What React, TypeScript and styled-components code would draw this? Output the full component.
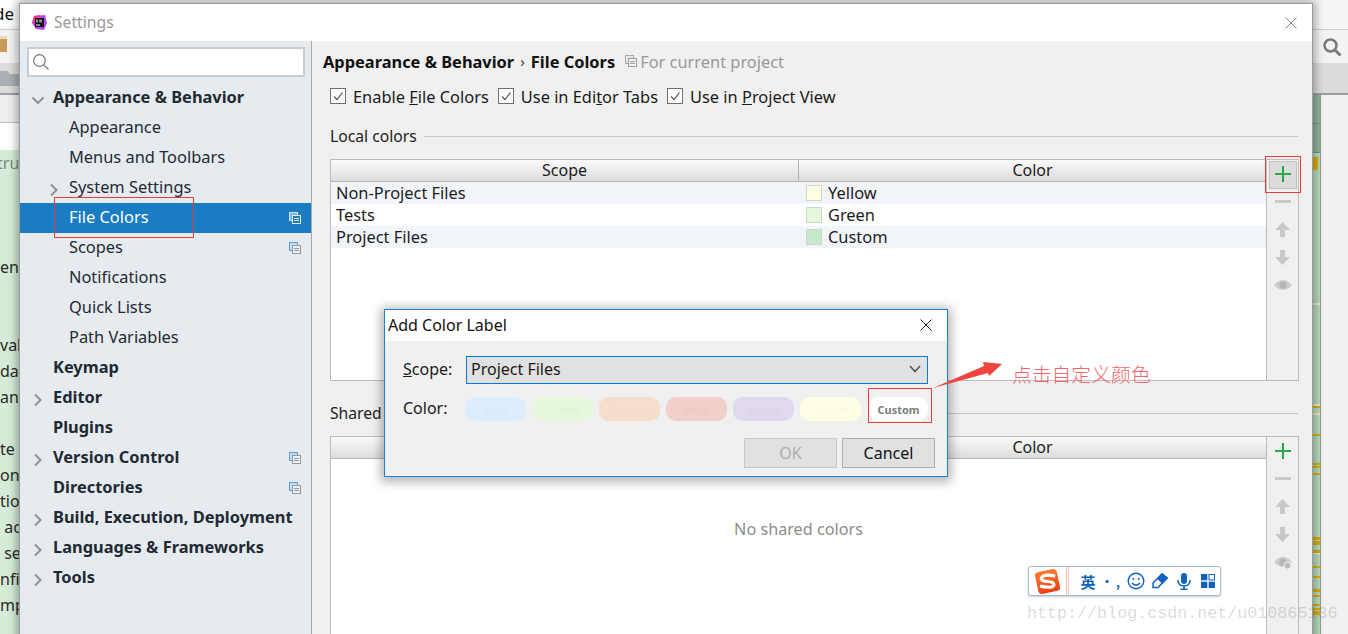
import React from "react";
import styled, { createGlobalStyle } from "styled-components";

const Global = createGlobalStyle`
  html, body { margin: 0; padding: 0; background: #f0f0f0; }
  body { font-family: "Noto Sans", "Liberation Sans", sans-serif; font-size: 16px; color: #1a1a1a; }
  * { box-sizing: border-box; }
`;

const Screen = styled.div`
  position: relative;
  width: 1348px;
  height: 634px;
  overflow: hidden;
  background: #f0f0f0;
`;

/* ---------- IDE behind the settings window ---------- */
const Ide = styled.div`
  display: flex;
  flex-direction: column;
  height: 100%;
`;
const MenuBar = styled.div`
  height: 30px;
  padding-top: 3px;
  line-height: 22px;
  background: #f5f5f5;
  color: #111;
  border-bottom: 1px solid #d0d0d0;
  font-size: 17px;
`;
const MenuLeft = styled.div`
  width: 20px;
  height: 100%;
  margin-top: -3px;
  padding-top: 3px;
  background: #fff;
  white-space: pre;
  overflow: hidden;
  text-indent: -6px;
`;
const ToolBar = styled.div`
  height: 33px;
  display: flex;
  justify-content: space-between;
  align-items: center;
  padding-right: 6px;
  background: #f3f3f3;
`;
const FolderSlot = styled.div`
  display: flex;
  margin-bottom: 5px;
`;
const NavBar = styled.div`
  height: 32px;
  display: flex;
  align-items: center;
  background: #dcdcdc;
  border-bottom: 2px solid #9e9e9e;
`;
const IdeBody = styled.div`
  flex: 1;
  display: flex;
  min-height: 0;
`;
const EditorEdge = styled.div`
  width: 20px;
  display: flex;
  flex-direction: column;
  background: #fff;
`;
const TabEdge = styled.div`
  height: 28px;
  flex: none;
  background: #eeeeee;
  border-bottom: 1px solid #bbb;
`;
const BlankEdge = styled.div`
  height: 27px;
  flex: none;
  background: #fff;
`;
const CodeEdge = styled.div`
  flex: 1;
  background: #d6ecd8;
  overflow: hidden;
  font-size: 16px;
`;
const CodeLine = styled.div<{ $muted?: boolean }>`
  height: 26px;
  line-height: 26px;
  white-space: pre;
  overflow: hidden;
  text-indent: ${(p) => (p.$muted ? -3 : 0)}px;
  color: ${(p) => (p.$muted ? "#7c8a7c" : "#2a2a2a")};
`;
const Filler = styled.div`
  flex: 1;
`;
const Stripe = styled.div`
  position: relative;
  width: 9px;
  background: #b8dcc0;
  border-right: 1px solid #999;
`;
const StripeHead = styled.div`
  height: 29px;
  background: #8fb39a;
  border-bottom: 1px solid #7b9685;
`;
const Mark = styled.div<{ $top: number; $h: number; $light?: boolean; $w?: number }>`
  position: absolute;
  left: 0;
  top: ${(p) => p.$top}px;
  width: ${(p) => p.$w ?? 8}px;
  height: ${(p) => p.$h}px;
  background: ${(p) => (p.$light ? "#f2eec0" : "#dcb100")};
`;
const Gutter = styled.div`
  width: 27px;
  background: #f1f1f1;
`;

/* ---------- settings window ---------- */
const SettingsWindow = styled.div`
  position: absolute;
  left: 19px;
  top: 3px;
  width: 1294px;
  height: 640px;
  display: flex;
  flex-direction: column;
  background: #f0f0f0;
  border: 1px solid #9b9b9b;
  box-shadow: 0 0 9px 2px rgba(0, 0, 0, 0.35);
  font-size: 16.4px;
`;
const TitleBar = styled.div`
  height: 37px;
  flex: none;
  display: flex;
  align-items: center;
  padding: 0 15px 0 12px;
  background: #fff;
`;
const WindowTitle = styled.div`
  margin-left: 7px;
  flex: 1;
  font-size: 15.7px;
  color: #9a9a9a;
  padding-bottom: 2px;
`;
const WindowBody = styled.div`
  flex: 1;
  display: flex;
  min-height: 0;
`;
const Sidebar = styled.div`
  width: 292px;
  flex: none;
  padding-top: 6px;
  background: #e6ebf0;
  border-right: 1px solid #a9a9a9;
`;
const SearchBox = styled.div`
  height: 30px;
  margin: 0 6px 6px 7px;
  display: flex;
  align-items: center;
  padding-left: 3px;
  background: #fff;
  border: 2px solid #c9cdd0;
`;
const TreeRow = styled.div<{ $selected?: boolean; $depth: number; $top?: boolean }>`
  position: relative;
  height: 30px;
  display: flex;
  align-items: center;
  padding-left: ${(p) => (p.$depth === 0 ? 33 : 49)}px;
  padding-right: 10px;
  padding-bottom: 4px;
  background: ${(p) => (p.$selected ? "#1a7cc3" : "transparent")};
  color: ${(p) => (p.$selected ? "#fff" : "#1f2a33")};
  font-weight: ${(p) => (p.$top ? 700 : 400)};
`;
const TreeLabel = styled.span`
  flex: 1;
  white-space: nowrap;
`;
const TreeBadge = styled.span`
  display: flex;
  margin-top: 4px;
`;
const Twist = styled.span<{ $left: number }>`
  position: absolute;
  left: ${(p) => p.$left}px;
  top: 6px;
  display: block;
  width: 14px;
  height: 14px;
`;

const Panel = styled.div`
  flex: 1;
  min-width: 0;
  padding: 0 13px 0 18px;
`;
const Crumbs = styled.div`
  height: 42px;
  margin-left: -7px;
  padding-bottom: 2px;
  display: flex;
  align-items: center;
  white-space: nowrap;
`;
const CrumbBold = styled.span`
  font-weight: 700;
  color: #111;
`;
const CrumbSep = styled.span`
  margin: 0 6px;
  font-weight: 400;
  color: #444;
  font-size: 15px;
`;
const ProjectNote = styled.span`
  margin-left: 10px;
  display: inline-flex;
  align-items: center;
  gap: 3px;
  color: #999;
`;
const CheckRow = styled.div`
  height: 28px;
  padding-bottom: 2px;
  display: flex;
  align-items: center;
  gap: 9px;
`;
const CheckItem = styled.label`
  display: flex;
  align-items: center;
  gap: 7px;
  white-space: nowrap;
  color: #1a1a1a;
`;
const Box = styled.span`
  width: 16px;
  height: 16px;
  flex: none;
  display: flex;
  background: #fff;
  border: 1px solid #6f6f6f;
`;
const SectionHead = styled.div<{ $gap: number }>`
  margin-top: ${(p) => p.$gap}px;
  height: 20px;
  display: flex;
  align-items: center;
  gap: 7px;
  color: #222;
  font-size: 15.7px;
  white-space: nowrap;
`;
const SectionRule = styled.div`
  flex: 1;
  height: 1px;
  margin-right: 1px;
  background: #c6c6c6;
`;
const TableFrame = styled.div<{ $h: number; $top: number }>`
  margin-top: ${(p) => p.$top}px;
  height: ${(p) => p.$h}px;
  display: flex;
  border: 1px solid #bcbcbc;
  background: #fff;
`;
const TableMain = styled.div`
  flex: 1;
  min-width: 0;
  display: flex;
  flex-direction: column;
`;
const HeaderRow = styled.div`
  height: 22px;
  flex: none;
  display: grid;
  grid-template-columns: 468px 1fr;
  background: linear-gradient(#fbfbfb, #dcdcdc);
  border-bottom: 1px solid #b8b8b8;
  line-height: 21px;
  text-align: center;
  color: #1c1c1c;
  font-size: 16px;
`;
const HeaderCell = styled.div<{ $first?: boolean }>`
  border-right: ${(p) => (p.$first ? "1px solid #b5b5b5" : "none")};
`;
const ColorRow = styled.div<{ $odd: boolean }>`
  height: 22px;
  flex: none;
  display: grid;
  grid-template-columns: 468px 1fr;
  align-items: center;
  line-height: 22px;
  color: #1c1c1c;
  background: ${(p) => (p.$odd ? "#f1f5fa" : "#fff")};
`;
const ScopeCell = styled.div`
  padding-left: 5px;
`;
const ColorCell = styled.div`
  display: flex;
  align-items: center;
  gap: 6px;
  padding-left: 7px;
`;
const Swatch = styled.span<{ $c: string }>`
  width: 16px;
  height: 16px;
  background: ${(p) => p.$c};
  border: 1px solid #cfd6cf;
`;
const Empty = styled.div`
  flex: 1;
  display: flex;
  align-items: flex-start;
  justify-content: center;
  padding-top: 59px;
  color: #8d8d8d;
  font-size: 16.2px;
`;
const Side = styled.div`
  width: 32px;
  flex: none;
  display: flex;
  flex-direction: column;
  align-items: center;
  padding-top: 1px;
  background: #f0f0f0;
  border-left: 1px solid #bcbcbc;
`;
const ToolButton = styled.div<{ $hover?: boolean; $raise?: boolean }>`
  width: 28px;
  height: 27.6px;
  flex: none;
  display: flex;
  align-items: center;
  justify-content: center;
  padding-bottom: ${(p) => (p.$raise ? 2 : 0)}px;
  background: ${(p) => (p.$hover ? "#dcdcdc" : "transparent")};
  border: 1px solid ${(p) => (p.$hover ? "#c2c2c2" : "transparent")};
`;

/* ---------- add color dialog ---------- */
const Dialog = styled.div`
  position: absolute;
  left: 384px;
  top: 309px;
  width: 564px;
  height: 168px;
  display: flex;
  flex-direction: column;
  background: #f0f0f0;
  border: 1px solid #1a80d8;
  box-shadow: 0 2px 10px 3px rgba(0, 0, 0, 0.3);
`;
const DialogTitle = styled.div`
  height: 31px;
  flex: none;
  display: flex;
  align-items: center;
  justify-content: space-between;
  padding: 0 15px 2px 3px;
  background: #fff;
  color: #111;
`;
const DialogBody = styled.div`
  flex: 1;
  padding: 15px 12px 0 18px;
  display: flex;
  flex-direction: column;
`;
const FormRow = styled.div<{ $gap?: number }>`
  margin-top: ${(p) => p.$gap ?? 0}px;
  display: flex;
  align-items: center;
`;
const FormLabel = styled.div`
  width: 63px;
  flex: none;
  padding-bottom: 2px;
  color: #1a1a1a;
`;
const SelectBox = styled.div`
  width: 462px;
  height: 28px;
  display: flex;
  align-items: center;
  justify-content: space-between;
  padding: 0 6px 2px 4px;
  background: #e1e1e1;
  border: 1px solid #0a78d7;
  color: #1a1a1a;
`;
const Pills = styled.div`
  display: flex;
  gap: 6px;
  margin-left: -1px;
`;
const Pill = styled.div<{ $c: string; $t: string; $custom?: boolean }>`
  width: ${(p) => (p.$custom ? 59 : 61)}px;
  height: 24px;
  margin-left: ${(p) => (p.$custom ? 2 : 0)}px;
  display: flex;
  align-items: center;
  justify-content: center;
  border-radius: 10px;
  background: ${(p) => p.$c};
  color: ${(p) => p.$t};
  font-size: 11px;
  font-weight: 700;
`;
const Actions = styled.div`
  margin-top: 17px;
  display: flex;
  justify-content: flex-end;
  gap: 5px;
`;
const DialogButton = styled.div<{ $disabled?: boolean }>`
  width: 93px;
  height: 30px;
  display: flex;
  align-items: center;
  justify-content: center;
  background: #e1e1e1;
  border: 1px solid ${(p) => (p.$disabled ? "#c9c9c9" : "#adadad")};
  color: ${(p) => (p.$disabled ? "#adadad" : "#111")};
`;

/* ---------- annotations over the screenshot ---------- */
const RedBox = styled.div<{ $x: number; $y: number; $w: number; $h: number }>`
  position: absolute;
  left: ${(p) => p.$x}px;
  top: ${(p) => p.$y}px;
  width: ${(p) => p.$w}px;
  height: ${(p) => p.$h}px;
  border: 1px solid #ec3b3b;
  pointer-events: none;
`;
const ArrowSvg = styled.svg`
  position: absolute;
  left: 930px;
  top: 360px;
`;
const Note = styled.div`
  position: absolute;
  left: 1012px;
  top: 360px;
  font-family: "Noto Sans CJK SC", sans-serif;
  font-size: 19.8px;
  line-height: 28px;
  font-weight: 300;
  color: #f4656a;
  white-space: nowrap;
`;
const ImeBar = styled.div`
  position: absolute;
  left: 1028px;
  top: 566px;
  width: 193px;
  height: 30px;
  display: flex;
  align-items: center;
  padding-left: 5px;
  background: #fff;
  border: 1px solid #a9bdd2;
  border-radius: 3px;
  box-shadow: 0 1px 2px rgba(60, 90, 130, 0.3);
`;
const ImeDivider = styled.div`
  width: 3px;
  height: 28px;
  margin: 0 7px 0 5px;
  border-left: 1px solid #f7c9b3;
  border-right: 1px solid #f7c9b3;
`;
const ImeSlot = styled.div`
  width: 24px;
  flex: none;
  display: flex;
  align-items: center;
  justify-content: center;
  color: #0f62bd;
  font-family: "Noto Sans CJK SC", sans-serif;
  font-size: 15px;
  font-weight: 700;
`;
const ImePunct = styled.span`
  font-size: 12px;
  letter-spacing: 3px;
`;
const Watermark = styled.div`
  position: absolute;
  left: 1027px;
  top: 604px;
  font-family: "Liberation Mono", monospace;
  font-size: 16.7px;
  line-height: 20px;
  color: rgba(110, 110, 100, 0.25);
  white-space: nowrap;
`;

/* ---------- icons ---------- */
const Chevron = ({ down }: { down?: boolean }) => (
  <svg width="14" height="14" viewBox="0 0 14 14" fill="none" stroke="#8e9296" strokeWidth="2">
    <path d={down ? "M1.5 4.5 L7 10 L12.5 4.5" : "M4 1.5 L9.5 7 L4 12.5"} />
  </svg>
);
const SharedIcon = ({ gray, light }: { gray?: boolean; light?: boolean }) => (
  <svg width="12" height="12" viewBox="0 0 12 12" fill="none">
    <rect x="0.5" y="0.5" width="8" height="8" fill={gray ? "#e6e6e6" : light ? "#7fb8e0" : "#c4dcf0"} stroke={gray ? "#a8a8a8" : light ? "#cfe6f6" : "#5c9fd4"} />
    <rect x="3.5" y="3.5" width="8" height="8" fill={light ? "#1a7cc3" : "#eef1f4"} stroke={gray ? "#a0a0a0" : light ? "#e4eef5" : "#949a9f"} />
    <path d="M5 6.5h5M5 8.5h5" stroke={gray ? "#a0a0a0" : light ? "#e4eef5" : "#949a9f"} />
  </svg>
);
const PhpLogo = () => (
  <svg width="15" height="15" viewBox="0 0 15 15">
    <path d="M2 1 L13 0 L15 8 L12 15 L4 14 L0 8 Z" fill="#b345f1" />
    <path d="M0 8 L2 1 L8 0 L5 6 Z" fill="#ff318c" />
    <rect x="3" y="3" width="9" height="9" fill="#111" />
    <rect x="4" y="9.5" width="4" height="1" fill="#fff" />
    <rect x="4" y="4.5" width="2" height="3" fill="#999" />
    <rect x="7" y="4.5" width="3" height="3" fill="#888" />
  </svg>
);
const CloseX = ({ color, size }: { color: string; size: number }) => (
  <svg width={size} height={size} viewBox="0 0 12 12" stroke={color} strokeWidth="0.9" fill="none">
    <path d="M0.5 0.5 L11.5 11.5 M11.5 0.5 L0.5 11.5" />
  </svg>
);
const Tick = () => (
  <svg width="14" height="14" viewBox="0 0 14 14" fill="none" stroke="#555" strokeWidth="1.2">
    <path d="M3 7.5 L6 10.5 L11.5 3.5" />
  </svg>
);
const Plus = () => (
  <svg width="16" height="16" viewBox="0 0 16 16" stroke="#29a94d" strokeWidth="2">
    <path d="M8 0 V16 M0 8 H16" />
  </svg>
);
const Minus = () => (
  <svg width="16" height="4" viewBox="0 0 16 4">
    <rect width="16" height="3" fill="#c8c8c8" />
  </svg>
);
const ArrowUp = () => (
  <svg width="15" height="15" viewBox="0 0 15 15">
    <path d="M7.5 0 L15 8 H10 V15 H5 V8 H0 Z" fill="#c8c8c8" />
  </svg>
);
const ArrowDown = () => (
  <svg width="15" height="15" viewBox="0 0 15 15">
    <path d="M7.5 15 L15 7 H10 V0 H5 V7 H0 Z" fill="#c8c8c8" />
  </svg>
);
const Eye = ({ off }: { off?: boolean }) => (
  <svg width="18" height="16" viewBox="0 0 18 16">
    <path d="M0 8 Q9 -2 18 8 Q9 18 0 8 Z" fill="#cbcbcb" />
    <circle cx="9" cy="8" r="3.6" fill="#b5b5b5" />
    {off && <circle cx="13.5" cy="11.5" r="3.6" fill="#bdbdbd" stroke="#f0f0f0" />}
  </svg>
);
const SearchGlyph = () => (
  <svg width="18" height="18" viewBox="0 0 18 18" fill="none" stroke="#777" strokeWidth="1.2">
    <circle cx="7.5" cy="7.5" r="5.8" />
    <path d="M11.8 11.8 L16.5 16.5" />
  </svg>
);
const IdeSearch = () => (
  <svg width="20" height="20" viewBox="0 0 20 20" fill="none" stroke="#7b7b7b">
    <circle cx="8.5" cy="8.5" r="6" strokeWidth="2.5" />
    <path d="M13 13 L18.5 18.5" strokeWidth="3" />
  </svg>
);
const FolderBrown = () => (
  <svg width="7" height="16" viewBox="0 0 7 16">
    <rect width="7" height="16" fill="#c99a5a" />
    <rect width="7" height="3" fill="#eadbb8" />
  </svg>
);
const FolderGray = () => (
  <svg width="20" height="15" viewBox="0 0 20 15">
    <path d="M0 0 H7 L10 3 H20 V15 H0 Z" fill="#aab0b6" />
  </svg>
);
const TitleChevron = () => (
  <svg width="12" height="8" viewBox="0 0 12 8" fill="none" stroke="#555" strokeWidth="1.6">
    <path d="M1 1 L6 6.5 L11 1" />
  </svg>
);
const SogouLogo = () => (
  <svg width="32" height="31" viewBox="0 0 32 31">
    <defs>
      <linearGradient id="sg" x1="0" y1="0" x2="0" y2="1">
        <stop offset="0" stopColor="#ff7a2e" />
        <stop offset="1" stopColor="#ea3f10" />
      </linearGradient>
    </defs>
    <rect x="3" y="2.5" width="26" height="26" rx="4" fill="url(#sg)" transform="rotate(-12 16 15.5)" />
    <path d="M25 9 Q10 6 8.5 12 Q8 15 16 15.5 Q24 16 23.5 19.5 Q22 24 7 21" fill="none" stroke="#fff" strokeWidth="3.8" />
  </svg>
);
const Smile = () => (
  <svg width="18" height="18" viewBox="0 0 18 18" fill="none" stroke="#0f62bd" strokeWidth="1.4">
    <circle cx="9" cy="9" r="7.8" />
    <circle cx="6.3" cy="7" r="1" fill="#0f62bd" stroke="none" />
    <circle cx="11.7" cy="7" r="1" fill="#0f62bd" stroke="none" />
    <path d="M5 11 Q9 15 13 11" />
  </svg>
);
const Eraser = () => (
  <svg width="16" height="16" viewBox="0 0 16 16" fill="none" stroke="#0f62bd" strokeWidth="1.5">
    <path d="M1 10 L10 1 L15 5 L6 14.5 H1 Z" />
    <path d="M6 5.5 L10.5 10 L15 5 L10 1 Z" fill="#0f62bd" />
  </svg>
);
const Mic = () => (
  <svg width="14" height="17" viewBox="0 0 14 17" fill="none" stroke="#0f62bd" strokeWidth="1.5">
    <rect x="4" y="0" width="6" height="11" rx="3" fill="#0f62bd" stroke="none" />
    <path d="M1 7 Q1 13 7 13 Q13 13 13 7 M7 13 V16 M3.5 16.2 H10.5" />
  </svg>
);
const Tiles = () => (
  <svg width="14" height="14" viewBox="0 0 14 14">
    <rect x="0" y="0" width="6.3" height="6.3" fill="#0f62bd" />
    <rect x="8" y="0.5" width="5.5" height="5.5" fill="none" stroke="#0f62bd" />
    <rect x="0" y="7.7" width="6.3" height="6.3" fill="#0f62bd" />
    <rect x="7.7" y="7.7" width="6.3" height="6.3" fill="#0f62bd" />
  </svg>
);

/* ---------- data ---------- */
type Node = { label: string; depth: number; twist?: "down" | "right"; shared?: boolean; selected?: boolean };
const tree: Node[] = [
  { label: "Appearance & Behavior", depth: 0, twist: "down" },
  { label: "Appearance", depth: 1 },
  { label: "Menus and Toolbars", depth: 1 },
  { label: "System Settings", depth: 1, twist: "right" },
  { label: "File Colors", depth: 1, shared: true, selected: true },
  { label: "Scopes", depth: 1, shared: true },
  { label: "Notifications", depth: 1 },
  { label: "Quick Lists", depth: 1 },
  { label: "Path Variables", depth: 1 },
  { label: "Keymap", depth: 0 },
  { label: "Editor", depth: 0, twist: "right" },
  { label: "Plugins", depth: 0 },
  { label: "Version Control", depth: 0, twist: "right", shared: true },
  { label: "Directories", depth: 0, shared: true },
  { label: "Build, Execution, Deployment", depth: 0, twist: "right" },
  { label: "Languages & Frameworks", depth: 0, twist: "right" },
  { label: "Tools", depth: 0, twist: "right" },
];
const localColors = [
  { scope: "Non-Project Files", color: "Yellow", c: "#fefee3" },
  { scope: "Tests", color: "Green", c: "#e6f7da" },
  { scope: "Project Files", color: "Custom", c: "#c6eac9" },
];
const pills = [
  { n: "Blue", c: "#dcedfd", t: "#d9eafa" },
  { n: "Green", c: "#e6f7da", t: "#e3f4d7" },
  { n: "Orange", c: "#f6dfca", t: "#f3dcc7" },
  { n: "Rose", c: "#f1cfca", t: "#eeccc7" },
  { n: "Violet", c: "#e0d8ef", t: "#ddd5ec" },
  { n: "Yellow", c: "#fefee3", t: "#fbfbe0" },
];
const edgeLines = ["trun", "", "", "", "enc", "", "", "val", "dat", "any", "", "te", "on", "tion", " ac", " se", "nfig", "mpl"];
const marks: { t: number; h: number; l?: boolean; w?: number }[] = [
  { t: 157, h: 13, w: 6 },
  { t: 303, h: 2, l: true },
  { t: 404, h: 2, l: true },
  { t: 406, h: 2 },
  { t: 413, h: 2, l: true },
  { t: 434, h: 2 },
  { t: 463, h: 2 },
  { t: 466, h: 2 },
  { t: 473, h: 2 },
  { t: 537, h: 3 },
  { t: 541, h: 4 },
  { t: 550, h: 3 },
  { t: 553, h: 1, l: true },
  { t: 566, h: 2 },
  { t: 576, h: 2 },
  { t: 589, h: 3 },
  { t: 595, h: 2 },
  { t: 604, h: 2 },
  { t: 608, h: 2 },
  { t: 611, h: 4 },
];

const Tools = ({ active, crossed }: { active?: boolean; crossed?: boolean }) => (
  <Side>
    <ToolButton $hover={active} $raise><Plus /></ToolButton>
    <ToolButton><Minus /></ToolButton>
    <ToolButton><ArrowUp /></ToolButton>
    <ToolButton><ArrowDown /></ToolButton>
    <ToolButton><Eye off={crossed} /></ToolButton>
  </Side>
);

export default function App() {
  return (
    <>
      <Global />
      <Screen>
        <Ide>
          <MenuBar><MenuLeft>de</MenuLeft></MenuBar>
          <ToolBar><FolderSlot><FolderBrown /></FolderSlot><IdeSearch /></ToolBar>
          <NavBar><FolderGray /></NavBar>
          <IdeBody>
            <EditorEdge>
              <TabEdge />
              <BlankEdge />
              <CodeEdge>
                {edgeLines.map((l, i) => (
                  <CodeLine key={i} $muted={i === 0}>{l}</CodeLine>
                ))}
              </CodeEdge>
            </EditorEdge>
            <Filler />
            <Stripe>
              <StripeHead />
              <StripeHead />
              {marks.map((m, i) => (
                <Mark key={i} $top={m.t - 95} $h={m.h} $light={m.l} $w={m.w} />
              ))}
            </Stripe>
            <Gutter />
          </IdeBody>
        </Ide>

        <SettingsWindow>
          <TitleBar>
            <PhpLogo />
            <WindowTitle>Settings</WindowTitle>
            <CloseX color="#777" size={12} />
          </TitleBar>
          <WindowBody>
            <Sidebar>
              <SearchBox><SearchGlyph /></SearchBox>
              {tree.map((n) => (
                <TreeRow key={n.label} $depth={n.depth} $top={n.depth === 0} $selected={n.selected}>
                  {n.twist && (
                    <Twist $left={n.depth === 0 ? 11 : 27}>
                      <Chevron down={n.twist === "down"} />
                    </Twist>
                  )}
                  <TreeLabel>{n.label}</TreeLabel>
                  {n.shared && <TreeBadge><SharedIcon light={n.selected} /></TreeBadge>}
                </TreeRow>
              ))}
            </Sidebar>
            <Panel>
              <Crumbs>
                <CrumbBold>Appearance &amp; Behavior</CrumbBold>
                <CrumbSep>›</CrumbSep>
                <CrumbBold>File Colors</CrumbBold>
                <ProjectNote><SharedIcon gray />For current project</ProjectNote>
              </Crumbs>
              <CheckRow>
                <CheckItem><Box><Tick /></Box><span>Enable <u>F</u>ile Colors</span></CheckItem>
                <CheckItem><Box><Tick /></Box><span>Use in Edi<u>t</u>or Tabs</span></CheckItem>
                <CheckItem><Box><Tick /></Box><span>Use in <u>P</u>roject View</span></CheckItem>
              </CheckRow>
              <SectionHead $gap={15}>Local colors<SectionRule /></SectionHead>
              <TableFrame $top={13} $h={222}>
                <TableMain>
                  <HeaderRow>
                    <HeaderCell $first>Scope</HeaderCell>
                    <HeaderCell>Color</HeaderCell>
                  </HeaderRow>
                  {localColors.map((r, i) => (
                    <ColorRow key={r.scope} $odd={i % 2 === 0}>
                      <ScopeCell>{r.scope}</ScopeCell>
                      <ColorCell><Swatch $c={r.c} />{r.color}</ColorCell>
                    </ColorRow>
                  ))}
                </TableMain>
                <Tools active />
              </TableFrame>
              <SectionHead $gap={22}>Shared colors<SectionRule /></SectionHead>
              <TableFrame $top={13} $h={240}>
                <TableMain>
                  <HeaderRow>
                    <HeaderCell $first>Scope</HeaderCell>
                    <HeaderCell>Color</HeaderCell>
                  </HeaderRow>
                  <Empty>No shared colors</Empty>
                </TableMain>
                <Tools crossed />
              </TableFrame>
            </Panel>
          </WindowBody>
        </SettingsWindow>

        <Dialog>
          <DialogTitle>
            Add Color Label
            <CloseX color="#111" size={12} />
          </DialogTitle>
          <DialogBody>
            <FormRow>
              <FormLabel><u>S</u>cope:</FormLabel>
              <SelectBox>Project Files<TitleChevron /></SelectBox>
            </FormRow>
            <FormRow $gap={13}>
              <FormLabel>Color:</FormLabel>
              <Pills>
                {pills.map((p) => (
                  <Pill key={p.n} $c={p.c} $t={p.t}>{p.n}</Pill>
                ))}
                <Pill $c="#fff" $t="#7b7b7b" $custom>Custom</Pill>
              </Pills>
            </FormRow>
            <Actions>
              <DialogButton $disabled>OK</DialogButton>
              <DialogButton>Cancel</DialogButton>
            </Actions>
          </DialogBody>
        </Dialog>

        <RedBox $x={54} $y={197} $w={140} $h={41} />
        <RedBox $x={1265} $y={156} $w={36} $h={37} />
        <RedBox $x={868} $y={388} $w={64} $h={35} />
        <ArrowSvg width="76" height="32" viewBox="0 0 76 32">
          <path d="M3 28 L54 6 L53 2 L72 4 L59 16 L58 13 Z" fill="#f0453f" />
        </ArrowSvg>
        <Note>点击自定义颜色</Note>

        <ImeBar>
          <SogouLogo />
          <ImeDivider />
          <ImeSlot>英</ImeSlot>
          <ImeSlot><ImePunct>•,</ImePunct></ImeSlot>
          <ImeSlot><Smile /></ImeSlot>
          <ImeSlot><Eraser /></ImeSlot>
          <ImeSlot><Mic /></ImeSlot>
          <ImeSlot><Tiles /></ImeSlot>
        </ImeBar>
        <Watermark>http://blog.csdn.net/u010865136</Watermark>
      </Screen>
    </>
  );
}
